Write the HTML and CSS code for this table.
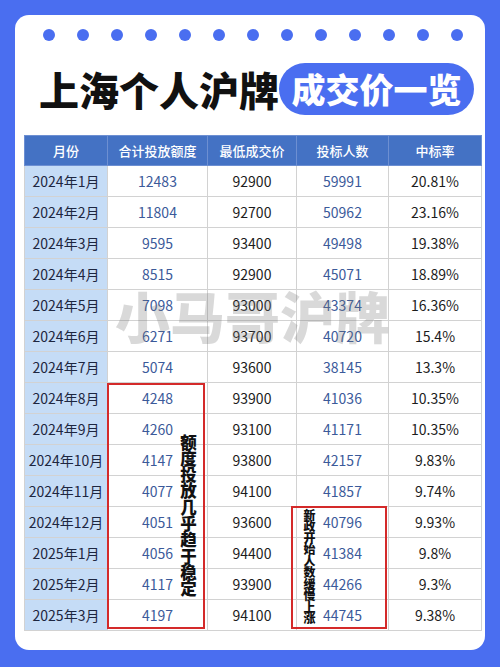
FILE: index.html
```html
<!DOCTYPE html>
<html lang="zh-CN">
<head>
    <meta charset="UTF-8">
    <meta name="viewport" content="width=device-width, initial-scale=1.0">
    <title>上海个人沪牌成交价一览</title>
    <link rel="stylesheet" href="styles.css">
</head>
<body>
    <div class="card">
        <div class="dots">
            <span></span><span></span><span></span><span></span><span></span>
            <span></span><span></span><span></span><span></span><span></span>
            <span></span><span></span><span></span>
        </div>

        <div class="title">
            <h1>上海个人沪牌</h1>
            <div class="pill">成交价一览</div>
        </div>

        <div class="table-wrap">
            <table>
                <thead>
                    <tr>
                        <th class="c1">月份</th>
                        <th class="c2">合计投放额度</th>
                        <th class="c3">最低成交价</th>
                        <th class="c4">投标人数</th>
                        <th class="c5">中标率</th>
                    </tr>
                </thead>
                <tbody>
                    <tr><td>2024年1月</td><td class="num">12483</td><td>92900</td><td class="num">59991</td><td>20.81%</td></tr>
                    <tr><td>2024年2月</td><td class="num">11804</td><td>92700</td><td class="num">50962</td><td>23.16%</td></tr>
                    <tr><td>2024年3月</td><td class="num">9595</td><td>93400</td><td class="num">49498</td><td>19.38%</td></tr>
                    <tr><td>2024年4月</td><td class="num">8515</td><td>92900</td><td class="num">45071</td><td>18.89%</td></tr>
                    <tr><td>2024年5月</td><td class="num">7098</td><td>93000</td><td class="num">43374</td><td>16.36%</td></tr>
                    <tr><td>2024年6月</td><td class="num">6271</td><td>93700</td><td class="num">40720</td><td>15.4%</td></tr>
                    <tr><td>2024年7月</td><td class="num">5074</td><td>93600</td><td class="num">38145</td><td>13.3%</td></tr>
                    <tr><td>2024年8月</td><td class="num">4248</td><td>93900</td><td class="num">41036</td><td>10.35%</td></tr>
                    <tr><td>2024年9月</td><td class="num">4260</td><td>93100</td><td class="num">41171</td><td>10.35%</td></tr>
                    <tr><td>2024年10月</td><td class="num">4147</td><td>93800</td><td class="num">42157</td><td>9.83%</td></tr>
                    <tr><td>2024年11月</td><td class="num">4077</td><td>94100</td><td class="num">41857</td><td>9.74%</td></tr>
                    <tr><td>2024年12月</td><td class="num">4051</td><td>93600</td><td class="num">40796</td><td>9.93%</td></tr>
                    <tr><td>2025年1月</td><td class="num">4056</td><td>94400</td><td class="num">41384</td><td>9.8%</td></tr>
                    <tr><td>2025年2月</td><td class="num">4117</td><td>93900</td><td class="num">44266</td><td>9.3%</td></tr>
                    <tr><td>2025年3月</td><td class="num">4197</td><td>94100</td><td class="num">44745</td><td>9.38%</td></tr>
                </tbody>
            </table>

            <!-- 水印和标注 -->
            <div class="watermark">小马哥沪牌</div>
            <div class="mark mark-quota"></div>
            <div class="note note-quota">额度投放几乎趋于稳定</div>
            <div class="mark mark-people"></div>
            <div class="note note-people">新政开始人数缓慢上涨</div>
        </div>
    </div>
</body>
</html>
```

FILE: styles.css
```css
body {
    margin: 0;
    padding: 15px;
    background-color: #4a6ef0;
    font-family: "Noto Sans CJK SC", "Noto Sans", sans-serif;
}
.card {
    background-color: #fff;
    border-radius: 14px;
    height: 635px;
    padding: 14px 9px 0 9px;
    box-sizing: border-box;
}
.dots {
    display: flex;
    justify-content: space-between;
    padding: 0 13px 0 19px;
}
.dots span {
    width: 12px;
    height: 12px;
    border-radius: 50%;
    background-color: #4a6ef0;
}
.title {
    display: flex;
    align-items: center;
    margin-top: 22px;
    height: 52px;
    padding-left: 15px;
}
.title h1 {
    margin: 0;
    font-size: 40px;
    font-weight: 900;
    color: #111;
    line-height: 1;
}
.pill {
    margin-left: 0;
    height: 52px;
    width: 195px;
    border-radius: 26px;
    background-color: #4a6ef0;
    color: #fff;
    font-size: 34px;
    font-weight: 900;
    display: flex;
    align-items: center;
    justify-content: center;
    line-height: 1;
}
.table-wrap {
    position: relative;
    margin-top: 20px;
    width: 452px;
}
table {
    width: 452px;
    border-collapse: collapse;
    table-layout: fixed;
    font-size: 14px;
    color: #1c1c1c;
}
th, td {
    border: 1px solid #d2d2d2;
    text-align: center;
    padding: 0;
}
th {
    background-color: #4472c4;
    color: #fff;
    font-weight: 500;
    font-size: 13px;
    height: 29px;
    border-color: #6d8fd2;
}
td {
    height: 30px;
}
.c1 { width: 82px; }
.c2 { width: 99px; }
.c3 { width: 88px; }
.c4 { width: 91px; }
.c5 { width: 92px; }
tbody td:first-child {
    background-color: #c5dcf6;
    color: #1d2640;
}
.num {
    color: #3b5a9a;
}
.watermark {
    position: absolute;
    left: 91px;
    top: 152px;
    font-size: 55px;
    font-weight: 900;
    color: rgba(120, 120, 120, 0.28);
    line-height: 1;
    white-space: nowrap;
}
.mark {
    position: absolute;
    border: 2px solid #d42a2a;
    box-sizing: border-box;
}
.mark-quota {
    left: 83px;
    top: 248px;
    width: 98px;
    height: 246px;
}
.mark-people {
    left: 267px;
    top: 371px;
    width: 96px;
    height: 123px;
}
.note {
    position: absolute;
    writing-mode: vertical-rl;
    text-orientation: upright;
    font-weight: 900;
    color: #111;
    line-height: 1;
}
.note-quota {
    left: 156px;
    top: 299px;
    font-size: 16.5px;
    letter-spacing: -0.2px;
}
.note-people {
    left: 279px;
    top: 374px;
    font-size: 12px;
    letter-spacing: -0.5px;
}
```
